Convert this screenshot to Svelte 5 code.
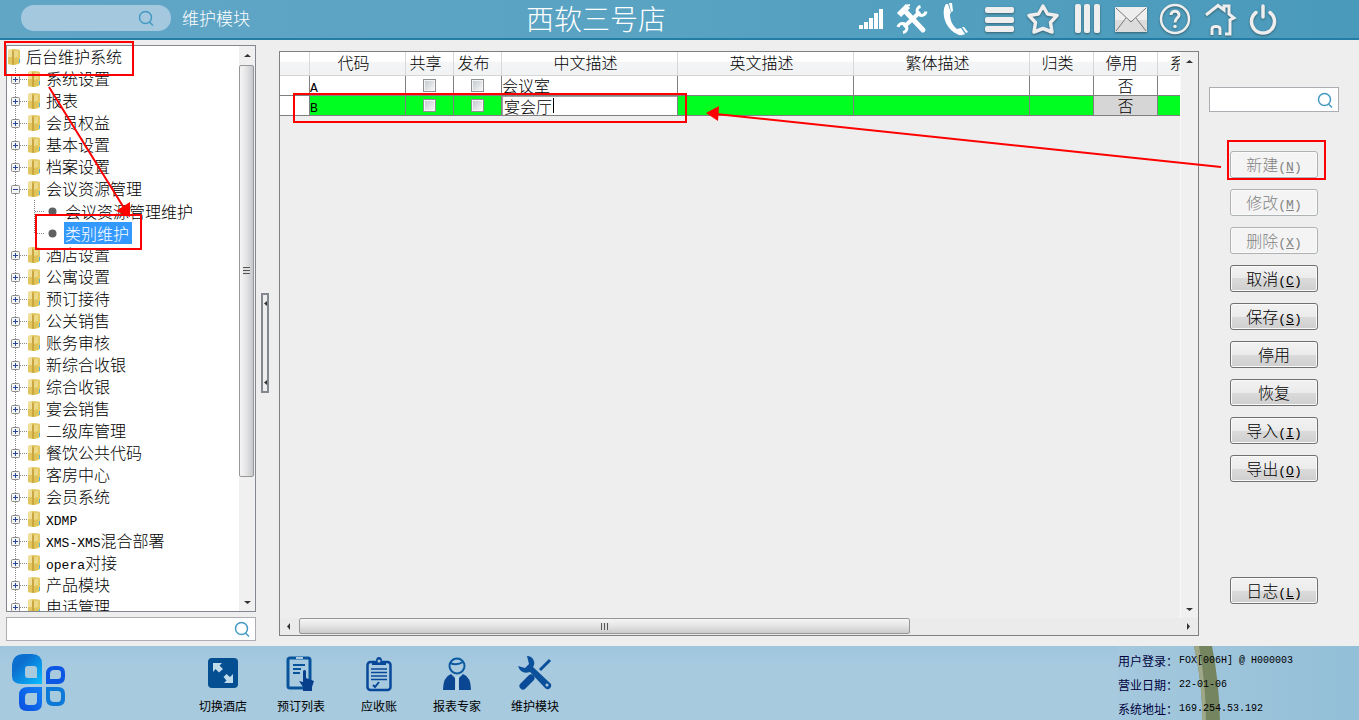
<script>
  const folders = [
    { name: "系统设置" },
    { name: "报表" },
    { name: "会员权益" },
    { name: "基本设置" },
    { name: "档案设置" },
    { name: "会议资源管理", children: ["会议资源管理维护", "类别维护"] },
    { name: "酒店设置" },
    { name: "公寓设置" },
    { name: "预订接待" },
    { name: "公关销售" },
    { name: "账务审核" },
    { name: "新综合收银" },
    { name: "综合收银" },
    { name: "宴会销售" },
    { name: "二级库管理" },
    { name: "餐饮公共代码" },
    { name: "客房中心" },
    { name: "会员系统" },
    { latin: "XDMP", name: "" },
    { latin: "XMS-XMS", name: "混合部署" },
    { latin: "opera", name: "对接" },
    { name: "产品模块" },
    { name: "电话管理" }
  ];

  let selected = $state("类别维护");

  const columns = ["", "代码", "共享", "发布", "中文描述", "英文描述", "繁体描述", "归类", "停用", "系统"];

  let rows = $state([
    { code: "A", shared: false, published: false, name: "会议室", stopped: "否" },
    { code: "B", shared: false, published: false, name: "宴会厅", stopped: "否", editing: true }
  ]);

  const actions = [
    { label: "新建", key: "N", disabled: true },
    { label: "修改", key: "M", disabled: true },
    { label: "删除", key: "X", disabled: true },
    { label: "取消", key: "C" },
    { label: "保存", key: "S" },
    { label: "停用" },
    { label: "恢复" },
    { label: "导入", key: "I" },
    { label: "导出", key: "O" }
  ];

  const info = [
    ["用户登录：", "FOX[006H] @ H000003"],
    ["营业日期：", "22-01-06"],
    ["系统地址：", "169.254.53.192"]
  ];
</script>

{#snippet lens()}
  <svg class="lens" width="18" height="18" viewBox="0 0 18 18" aria-hidden="true">
    <circle cx="8.500" cy="8.500" r="6" />
    <path d="M12.500 13 L16 16.500" />
  </svg>
{/snippet}

{#snippet folder()}
  <svg class="folder" width="14" height="18" viewBox="0 0 14 18" aria-hidden="true">
    <path d="M1 2 L6 1 L12 1.500 Q13 2 13 3 V14 L12 16 L6 17 L1 16 Z" fill="#e3c963" />
    <path d="M1 2 L5 1.200 V16.600 L1 16 Z" fill="#efdf98" />
    <path d="M1 9 L5 9 V16.600 L1 16 Z" fill="#e2c761" />
    <path d="M5 2 L7 3.500 V17 L5 16.600 Z" fill="#c9a640" />
    <path d="M7 3.500 L11 2.500 V15.500 L7 17 Z" fill="#ecd988" />
    <path d="M7 10 L11 9 V15.500 L7 17 Z" fill="#dfc356" />
    <path d="M12.500 11 V15" stroke="#57b4dc" />
  </svg>
{/snippet}

{#snippet arrow(points)}
  <svg class="arrow" width="9" height="9" viewBox="0 0 9 9" aria-hidden="true">
    <polygon {points} fill="#333" />
  </svg>
{/snippet}

<div class="shell">
  <header>
    <div class="module">
      <label class="pill">
        <input type="text" aria-label="搜索模块" />
        {@render lens()}
      </label>
      <span class="module-name">维护模块</span>
    </div>
    <h1>西软三号店</h1>
    <nav class="tools">
      <button aria-label="信号">
        <svg viewBox="0 0 44 38" fill="#fff">
          <path d="M14 24h4v4h-4zM19 21h4v7h-4zM24 17h4v11h-4zM29 12h4v16h-4zM34 8h4v20h-4z" />
        </svg>
      </button>
      <button aria-label="工具">
        <svg viewBox="0 0 44 38" fill="none" stroke="#fff">
          <path d="M17 11 L34 29" stroke-width="5" stroke-linecap="round" />
          <path d="M10 14 L19 5" stroke-width="6" />
          <path d="M16 5 L21 4" stroke-width="2" />
          <path d="M15 26 L31 11" stroke-width="4" />
          <path d="M31.500 5.500 A4.500 4.500 0 1 0 37 10.500" stroke-width="3" />
          <path d="M9 26 A4.500 4.500 0 1 1 14 31.500" stroke-width="3" />
        </svg>
      </button>
      <button aria-label="电话">
        <svg viewBox="0 0 44 38" fill="#fff">
          <path d="M13 3 C8 10 11 27 24 33 C27 35 30 34 32 33 L28 27 L24 28 C19 24 17 19 17 13 L18 12 L15 3 Z" />
          <path d="M16 2 L19 2 L20 10 L18 11 Z M29 26 L31 26 L35 31 L33 32 Z" />
        </svg>
      </button>
      <button aria-label="菜单">
        <svg class="raised" viewBox="0 0 44 38" fill="#eee">
          <rect x="8" y="6" width="29" height="6" rx="2" />
          <rect x="8" y="16" width="29" height="6" rx="2" />
          <rect x="8" y="25" width="29" height="6" rx="2" />
        </svg>
      </button>
      <button aria-label="收藏">
        <svg class="raised" viewBox="0 0 44 38" fill="none" stroke="#eee" stroke-width="3.500" stroke-linejoin="round">
          <path d="M22 5 L26.500 13 L36 14.500 L29.500 21.500 L31 31 L22 27.500 L13 31 L14.500 21.500 L8 14.500 L17.500 13 Z" />
        </svg>
      </button>
      <button aria-label="列">
        <svg class="raised" viewBox="0 0 44 38" fill="#eee">
          <rect x="10" y="3" width="6" height="29" rx="2" />
          <rect x="19" y="3" width="6" height="29" rx="2" />
          <rect x="29" y="3" width="6" height="29" rx="2" />
        </svg>
      </button>
      <button aria-label="邮件">
        <svg class="raised" viewBox="0 0 44 38">
          <rect x="6" y="6" width="32" height="25" rx="1" fill="#eee" />
          <path d="M6 19H38V31H6Z" fill="#dcdcdc" />
          <path d="M7 7 L22 21 L37 7 M7 30 L17 17 M37 30 L27 17" fill="none" stroke="#777" />
        </svg>
      </button>
      <button aria-label="帮助">
        <svg class="raised" viewBox="0 0 44 38" fill="none" stroke="#eee">
          <circle cx="22" cy="18" r="14" stroke-width="2.500" />
          <path d="M18 14 C18 9 26 9 26 14 C26 17 22 17 22 21.500" stroke-width="3" />
          <circle cx="22" cy="25.500" r="1.800" fill="#eee" stroke="none" />
        </svg>
      </button>
      <button aria-label="主页">
        <svg class="raised" viewBox="0 0 44 38" fill="none" stroke="#eee" stroke-width="3">
          <path d="M9 14 L21 4.500 L27 9 V5 H32 V13 L37 17 L33 19 V33 H28" />
          <path d="M15 34 V28 Q15 25.500 19 25.500 Q23 25.500 23 28 V34" />
        </svg>
      </button>
      <button aria-label="退出">
        <svg class="raised" viewBox="0 0 44 38" fill="none" stroke="#eee" stroke-width="3.500" stroke-linecap="round">
          <path d="M15 11.500 A11.500 11.500 0 1 0 29 11.500 M22 5 V16" />
        </svg>
      </button>
    </nav>
  </header>

  <main>
    <aside>
      <div class="tree-box">
        <ul class="tree">
          <li class="root">{@render folder()}<span class="name">后台维护系统</span></li>
          {#each folders as item}
            <li>
              <button class="toggle" aria-label="展开">
                <svg width="20" height="22" viewBox="0 0 20 22">
                  <path d="M8.500 0V22M13 11.500H20" stroke="#888" stroke-dasharray="1 1" />
                  <rect x="4.500" y="7.500" width="8" height="8" rx="1" fill="#f4f4f4" stroke="#8c8c8c" />
                  <path d="M6 11.500H11" stroke="#24469c" />
                  {#if !item.children}<path d="M8.500 9V14" stroke="#24469c" />{/if}
                </svg>
              </button>
              {@render folder()}
              <span class="name">{#if item.latin}<span class="latin">{item.latin}</span>{/if}{item.name}</span>
            </li>
            {#each item.children ?? [] as child}
              <li>
                <svg width="57" height="22" viewBox="0 0 57 22" aria-hidden="true">
                  <path d="M27.500 0V{child === '类别维护' ? 11 : 22}M28 11.500H37" stroke="#888" stroke-dasharray="1 1" />
                  <path d="M8.500 0V22" stroke="#888" stroke-dasharray="1 1" />
                  <circle cx="45.500" cy="11.500" r="4" fill="#606060" />
                </svg>
                <button class="leaf" class:selected={child === selected} onclick={() => (selected = child)}>{child}</button>
              </li>
            {/each}
          {/each}
        </ul>
        <div class="vbar">
          {@render arrow("4.5,3 8,6 1,6")}
          <div class="track">
            <div class="thumb"><i></i></div>
          </div>
          {@render arrow("1,3 8,3 4.5,6")}
        </div>
      </div>
      <label class="search">
        <input type="text" aria-label="搜索菜单" />
        {@render lens()}
      </label>
    </aside>

    <div class="splitter">
      <div>
        {@render arrow("6,2 6,7 3,4.5")}
        {@render arrow("6,2 6,7 3,4.5")}
      </div>
    </div>

    <section class="grid">
      <div class="sheet">
        <table>
          <colgroup>
            <col class="w-mark" />
            <col class="w-code" />
            <col class="w-flag" />
            <col class="w-flag" />
            <col class="w-text" />
            <col class="w-text" />
            <col class="w-text" />
            <col class="w-kind" />
            <col class="w-kind" />
            <col class="w-kind" />
          </colgroup>
          <thead>
            <tr>
              {#each columns as column}
                <th>{column}</th>
              {/each}
            </tr>
          </thead>
          <tbody>
            {#each rows as row}
              <tr class:current={row.editing}>
                <td class="mark"></td>
                <td><span class="latin">{row.code}</span></td>
                <td class="center"><input type="checkbox" aria-label="共享" bind:checked={row.shared} /></td>
                <td class="center"><input type="checkbox" aria-label="发布" bind:checked={row.published} /></td>
                <td>
                  {#if row.editing}
                    <input class="cell-input" type="text" aria-label="中文描述" bind:value={row.name} />
                  {:else}
                    {row.name}
                  {/if}
                </td>
                <td></td>
                <td></td>
                <td></td>
                <td class="center stopped">{row.stopped}</td>
                <td></td>
              </tr>
            {/each}
          </tbody>
        </table>
      </div>
      <div class="vbar plain">
        {@render arrow("4.5,3 8,6 1,6")}
        {@render arrow("1,3 8,3 4.5,6")}
      </div>
      <div class="hbar">
        {@render arrow("6,1 6,8 3,4.5")}
        <div class="track">
          <div class="thumb"><i></i></div>
        </div>
        {@render arrow("3,1 3,8 6,4.5")}
      </div>
    </section>

    <section class="side">
      <label class="search">
        <input type="text" aria-label="搜索代码" />
        {@render lens()}
      </label>
      <div class="actions">
        {#each actions as action}
          <button disabled={action.disabled}>
            {action.label}{#if action.key}<span class="latin">(<u>{action.key}</u>)</span>{/if}
          </button>
        {/each}
        <button class="log">日志<span class="latin">(<u>L</u>)</span></button>
      </div>
    </section>
  </main>

  <footer>
    <svg class="logo" width="54" height="60" viewBox="0 0 54 60" aria-hidden="true">
      <defs>
        <linearGradient id="petal" x1="0" y1="0" x2="1" y2="1">
          <stop offset="0.3" stop-color="#0b6fd0" />
          <stop offset="1" stop-color="#08bcff" />
        </linearGradient>
        <linearGradient id="petal-dark" x1="0" y1="1" x2="1" y2="0">
          <stop offset="0" stop-color="#0a4fe0" />
          <stop offset="1" stop-color="#127ff5" />
        </linearGradient>
      </defs>
      <path d="M12 1H20Q30 1 30 11V31H10Q0 31 0 23V12Q1 1 12 1ZM16 13Q13 13 13 16V22Q13 25 16 25H25V16Q25 13 22 13Z" fill="url(#petal)" fill-rule="evenodd" />
      <path d="M42 13H46Q53 13 53 20V24Q53 31 46 31H34V21Q34 13 42 13ZM42 17Q38 17 38 21V26H46Q49 26 49 23V20Q49 17 46 17Z" fill="#0b57e4" fill-rule="evenodd" />
      <path d="M16 34H30V50Q30 58 22 58H15Q7 58 7 50V42Q7 34 16 34ZM17 40Q13 40 13 44V49Q13 52 16 52H21Q25 52 25 48V40Z" fill="url(#petal-dark)" fill-rule="evenodd" />
      <path d="M34 34H46Q53 34 53 41V46Q53 53 46 53H41Q34 53 34 46ZM38 38V45Q38 49 42 49H46Q49 49 49 45V41Q49 38 46 38Z" fill="#0c78d8" fill-rule="evenodd" />
    </svg>
    <nav class="shortcuts">
      <a href="#hotel">
        <svg viewBox="0 0 36 38">
          <rect x="3" y="4" width="30" height="30" rx="4" fill="#044f92" />
          <path d="M8 9H17L14.500 11.500L18 15L14 18.500L10.500 15L8 18Z" fill="#c0dcea" />
          <path d="M28 29H19L21.500 26.500L18.500 23L21.500 20L25 23L28 20Z" fill="#c0dcea" />
        </svg>
        切换酒店
      </a>
      <a href="#booking">
        <svg viewBox="0 0 36 38" fill="none" stroke="#08549c" stroke-width="2">
          <rect x="5" y="4" width="22" height="30" rx="2" stroke-width="3" />
          <path d="M13 4H20" stroke="#a8c9de" />
          <path d="M10 11H22M10 15H18M10 19H17" />
          <path d="M20 17Q21.500 15 23 17V24L31 27L29 33V37H20V33L16 27L20 28Z" fill="#073f8c" stroke="none" />
        </svg>
        预订列表
      </a>
      <a href="#receivable">
        <svg viewBox="0 0 36 38" fill="none" stroke="#08489a" stroke-width="2">
          <rect x="6.500" y="8" width="23" height="28" rx="3" stroke-width="2.500" />
          <path d="M11 11V7H15Q15 3 18 3Q21 3 21 7H25V11Z" fill="#08489a" stroke="none" />
          <circle cx="18" cy="7" r="1.500" fill="#a8c9de" stroke="none" />
          <path d="M10 15H26M10 18.500H26M10 22H26M10 25.500H26" stroke-width="1.500" />
          <path d="M12 31L14 33L18 28" />
        </svg>
        应收账
      </a>
      <a href="#report">
        <svg viewBox="0 0 36 38">
          <circle cx="18" cy="12" r="7.500" fill="none" stroke="#0b59a0" stroke-width="2" />
          <path d="M11 9Q18 12 24 8" fill="none" stroke="#0b59a0" stroke-width="2" />
          <path d="M12 20L16 24V36H4Q4 23 12 20ZM24 20L20 24V36H32Q32 23 24 20Z" fill="#0a4692" />
          <path d="M18 22L20 24L19 28L20 36H16L17 28L16 24Z" fill="#bcd7e6" />
        </svg>
        报表专家
      </a>
      <a href="#maintain">
        <svg viewBox="0 0 36 38" fill="none">
          <path d="M10 2A7 7 0 0 1 16 13L34 30Q35 33 32 35Q30 36 28 34L13 18Q4 21 1 12L8 14L12 10Z" fill="#0b509b" />
          <path d="M33 6L23 16" stroke="#0b509b" stroke-width="3" />
          <path d="M14 24L6 32" stroke="#0b4a98" stroke-width="7" stroke-linecap="round" />
          <circle cx="30" cy="31" r="1.500" fill="#a8c9de" />
        </svg>
        维护模块
      </a>
    </nav>
    <div class="status">
      <svg class="trunk" width="40" height="74" viewBox="0 0 40 74" aria-hidden="true">
        <path d="M6 0H24Q31 35 32 74H14Q15 40 6 0Z" fill="#75855f" />
        <path d="M6 0H11Q18 40 18 74H14Q15 40 6 0Z" fill="#9ea888" />
      </svg>
      <dl>
        {#each info as [label, value]}
          <div><dt>{label}</dt><dd>{value}</dd></div>
        {/each}
      </dl>
    </div>
  </footer>

  <svg class="marks" width="1359" height="720" aria-hidden="true">
    <g fill="none" stroke="#f00" stroke-width="2">
      <rect x="5" y="42" width="128" height="33" />
      <rect x="36" y="215" width="105" height="34" />
      <rect x="294" y="94" width="392" height="28" />
      <rect x="1228" y="141" width="97" height="38" />
      <path d="M49 87L124 208M1221 167L716 114" />
    </g>
    <path d="M130 202L116 211L130 217ZM706 113L719 106L718 121Z" fill="#f00" />
  </svg>
</div>

<style>
  :global(body) {
    margin: 0;
  }
  .shell {
    position: relative;
    display: grid;
    grid-template-rows: 40px minmax(0, 1fr) 74px;
    height: 100vh;
    overflow: hidden;
    background: #eee;
    color: #000;
    font-family: "Noto Sans CJK SC", sans-serif;
    font-size: 16px;
    font-weight: 300;
    line-height: 22px;
  }
  button,
  input {
    font: inherit;
    color: inherit;
    margin: 0;
    padding: 0;
    border: 0;
    background: none;
  }
  svg {
    display: block;
    flex: none;
  }
  .latin {
    font-family: "Liberation Mono", monospace;
    font-size: 13px;
    line-height: 1;
  }

  header {
    display: grid;
    grid-template-columns: 526px auto 1fr;
    align-items: center;
    box-sizing: border-box;
    padding-right: 74px;
    border-bottom: 2px solid #247da5;
    background: linear-gradient(90deg, #62a6c6, #58a2c2 50%, #4a9abb);
    color: #fff;
  }
  .module {
    display: flex;
    align-items: center;
    gap: 11px;
    padding-left: 21px;
    margin-bottom: 4px;
  }
  .module-name {
    font-size: 17px;
  }
  .pill {
    display: flex;
    align-items: center;
    box-sizing: border-box;
    width: 150px;
    height: 26px;
    padding-right: 16px;
    border-radius: 13px;
    background: #a4c9df;
  }
  .pill input,
  .search input {
    flex: 1;
    min-width: 0;
    outline: none;
  }
  .lens {
    fill: none;
    stroke: #4499c2;
    stroke-width: 1.5;
  }
  h1 {
    margin: 0;
    font-size: 28px;
    font-weight: 300;
    line-height: 36px;
    padding-bottom: 4px;
  }
  .tools {
    display: flex;
    justify-content: flex-end;
  }
  .tools svg {
    width: 44px;
    height: 38px;
  }
  .raised {
    filter: drop-shadow(0 1px 1px #35606f);
  }

  main {
    display: flex;
    min-height: 0;
  }
  aside {
    display: flex;
    flex-direction: column;
    gap: 5px;
    width: 250px;
    padding: 5px 0 5px 6px;
  }
  .tree-box {
    display: flex;
    flex: 1;
    min-height: 0;
    border: 1px solid #828790;
    background: #fff;
  }
  .tree {
    flex: 1;
    margin: 0;
    padding: 0;
    overflow: hidden;
    list-style: none;
    white-space: nowrap;
  }
  .tree li {
    display: flex;
    align-items: center;
    height: 22px;
  }
  .name {
    padding-bottom: 2px;
  }
  .folder {
    margin-right: 5px;
  }
  .leaf {
    padding: 0 3px 0 1px;
  }
  .selected {
    background: #3399ff;
    color: #fff;
  }
  .vbar {
    display: flex;
    flex-direction: column;
    align-items: center;
    gap: 5px;
    width: 16px;
    padding: 5px 0 4px;
    background: #f0f0f0;
  }
  .track {
    flex: 1;
    align-self: stretch;
  }
  .thumb {
    display: flex;
    align-items: center;
    justify-content: center;
    box-sizing: border-box;
    border: 1px solid #979797;
    border-radius: 2px;
  }
  .vbar .thumb {
    width: 15px;
    height: 78%;
    background: linear-gradient(90deg, #f5f5f5, #e6e6e8 45%, #c6c7cb);
  }
  .vbar i {
    width: 7px;
    height: 8px;
    background: repeating-linear-gradient(#555 0 1px, #ddd 1px 3px);
  }
  .search {
    display: flex;
    align-items: center;
    box-sizing: border-box;
    height: 24px;
    padding-right: 4px;
    border: 1px solid #abadb3;
    background: #fff;
  }

  .splitter {
    display: flex;
    align-items: center;
    width: 18px;
    padding: 0 0 0 5px;
  }
  .splitter div {
    display: flex;
    flex-direction: column;
    justify-content: space-between;
    align-items: center;
    box-sizing: border-box;
    width: 8px;
    height: 100px;
    padding: 4px 0;
    border: 2px solid #828790;
  }

  .grid {
    display: grid;
    flex: 1;
    grid-template-columns: minmax(0, 1fr) 18px;
    grid-template-rows: minmax(0, 1fr) 17px;
    min-width: 0;
    margin: 11px 0 10px;
    border: 1px solid #808080;
  }
  .sheet {
    overflow: hidden;
  }
  table {
    width: 942px;
    table-layout: fixed;
    border-collapse: separate;
    border-spacing: 0;
  }
  .w-mark {
    width: 30px;
  }
  .w-code {
    width: 96px;
  }
  .w-flag {
    width: 48px;
  }
  .w-text {
    width: 176px;
  }
  .w-kind {
    width: 64px;
  }
  th,
  td {
    box-sizing: border-box;
    padding: 0;
    overflow: hidden;
    white-space: nowrap;
    text-align: left;
  }
  th {
    height: 24px;
    padding-right: 8px;
    padding-bottom: 3px;
    border-right: 1px solid #d8d8d8;
    border-bottom: 1px solid #d5d5d5;
    background: linear-gradient(#fff 40%, #f4f5f7 45%, #f1f2f4);
    font-weight: 300;
    line-height: 20px;
    text-align: center;
  }
  td {
    height: 20px;
    border-right: 1px solid #808080;
    border-bottom: 1px solid #808080;
    background: #fff;
    line-height: 19px;
  }
  .center {
    text-align: center;
  }
  .current td {
    background: #00ff21;
  }
  .current .mark {
    background: #fff;
  }
  .current .stopped {
    background: #d6d6d6;
  }
  input[type="checkbox"] {
    display: block;
    appearance: none;
    box-sizing: border-box;
    width: 13px;
    height: 13px;
    margin: 0 auto;
    border: 1px solid #8e8f8f;
    outline: 1px solid #f4f4f4;
    outline-offset: -2px;
    background: linear-gradient(135deg, #bfc5cc, #fafafa);
  }
  .cell-input {
    display: block;
    box-sizing: border-box;
    width: 100%;
    height: 19px;
    padding-left: 1px;
    border-top: 1px solid #a0a0a0;
    border-left: 1px solid #a0a0a0;
    background: linear-gradient(#000, #000) 50px 1px / 1px 15px no-repeat #fff;
    line-height: 18px;
  }
  .plain {
    justify-content: space-between;
    box-sizing: border-box;
    width: 18px;
    border-left: 1px solid #f8f8f8;
  }
  .hbar {
    display: flex;
    grid-column: 1 / -1;
    align-items: center;
    gap: 6px;
    padding: 0 5px 0 4px;
    background: #ebebeb;
  }
  .hbar .track {
    padding-right: 6px;
  }
  .hbar .thumb {
    width: 70%;
    height: 16px;
    background: linear-gradient(#f5f5f5, #e6e6e6 45%, #cbcbcd);
  }
  .hbar i {
    width: 8px;
    height: 7px;
    background: repeating-linear-gradient(90deg, #555 0 1px, #ddd 1px 3px);
  }

  .side {
    display: flex;
    flex-direction: column;
    gap: 39px;
    box-sizing: border-box;
    width: 160px;
    padding: 47px 20px 42px 10px;
  }
  .side .search {
    height: 25px;
  }
  .actions {
    display: flex;
    flex: 1;
    flex-direction: column;
    gap: 11px;
    padding: 0 21px;
  }
  .actions button {
    height: 27px;
    padding-bottom: 2px;
    border: 1px solid #707070;
    border-radius: 3px;
    box-shadow: inset 0 0 0 1px #fafafa;
    background: linear-gradient(#f2f2f2, #ebebeb 50%, #dbdbdb 50%, #cfcfcf);
  }
  .actions button:disabled {
    border-color: #adb2b5;
    background: #f4f4f4;
    color: #838383;
  }
  .actions .log {
    margin-top: auto;
  }

  footer {
    display: flex;
    align-items: flex-start;
    background: linear-gradient(#9fc6de, #a8cadf 30%, #a8cade);
    font-weight: 400;
  }
  .logo {
    margin: 7px 118px 0 12px;
  }
  .shortcuts {
    display: flex;
    flex: 1;
  }
  .shortcuts a {
    display: flex;
    flex-direction: column;
    align-items: center;
    gap: 4px;
    width: 78px;
    padding-top: 8px;
    color: #000;
    font-size: 12px;
    line-height: 20px;
    text-decoration: none;
  }
  .shortcuts svg {
    width: 36px;
    height: 38px;
  }
  .status {
    position: relative;
    width: 241px;
    height: 74px;
    background: linear-gradient(90deg, #a4c8dd, #93bfd8);
  }
  .trunk {
    position: absolute;
    top: 0;
    left: 70px;
  }
  dl {
    position: relative;
    margin: 0;
    padding-top: 3px;
    font-size: 12px;
    line-height: 24px;
  }
  dl div {
    display: flex;
    height: 24px;
  }
  dt {
    width: 61px;
    color: #00003c;
  }
  dd {
    margin: 0;
    font-family: "Liberation Mono", monospace;
    font-size: 10px;
  }

  .marks {
    position: absolute;
    top: 0;
    left: 0;
    pointer-events: none;
  }
</style>
